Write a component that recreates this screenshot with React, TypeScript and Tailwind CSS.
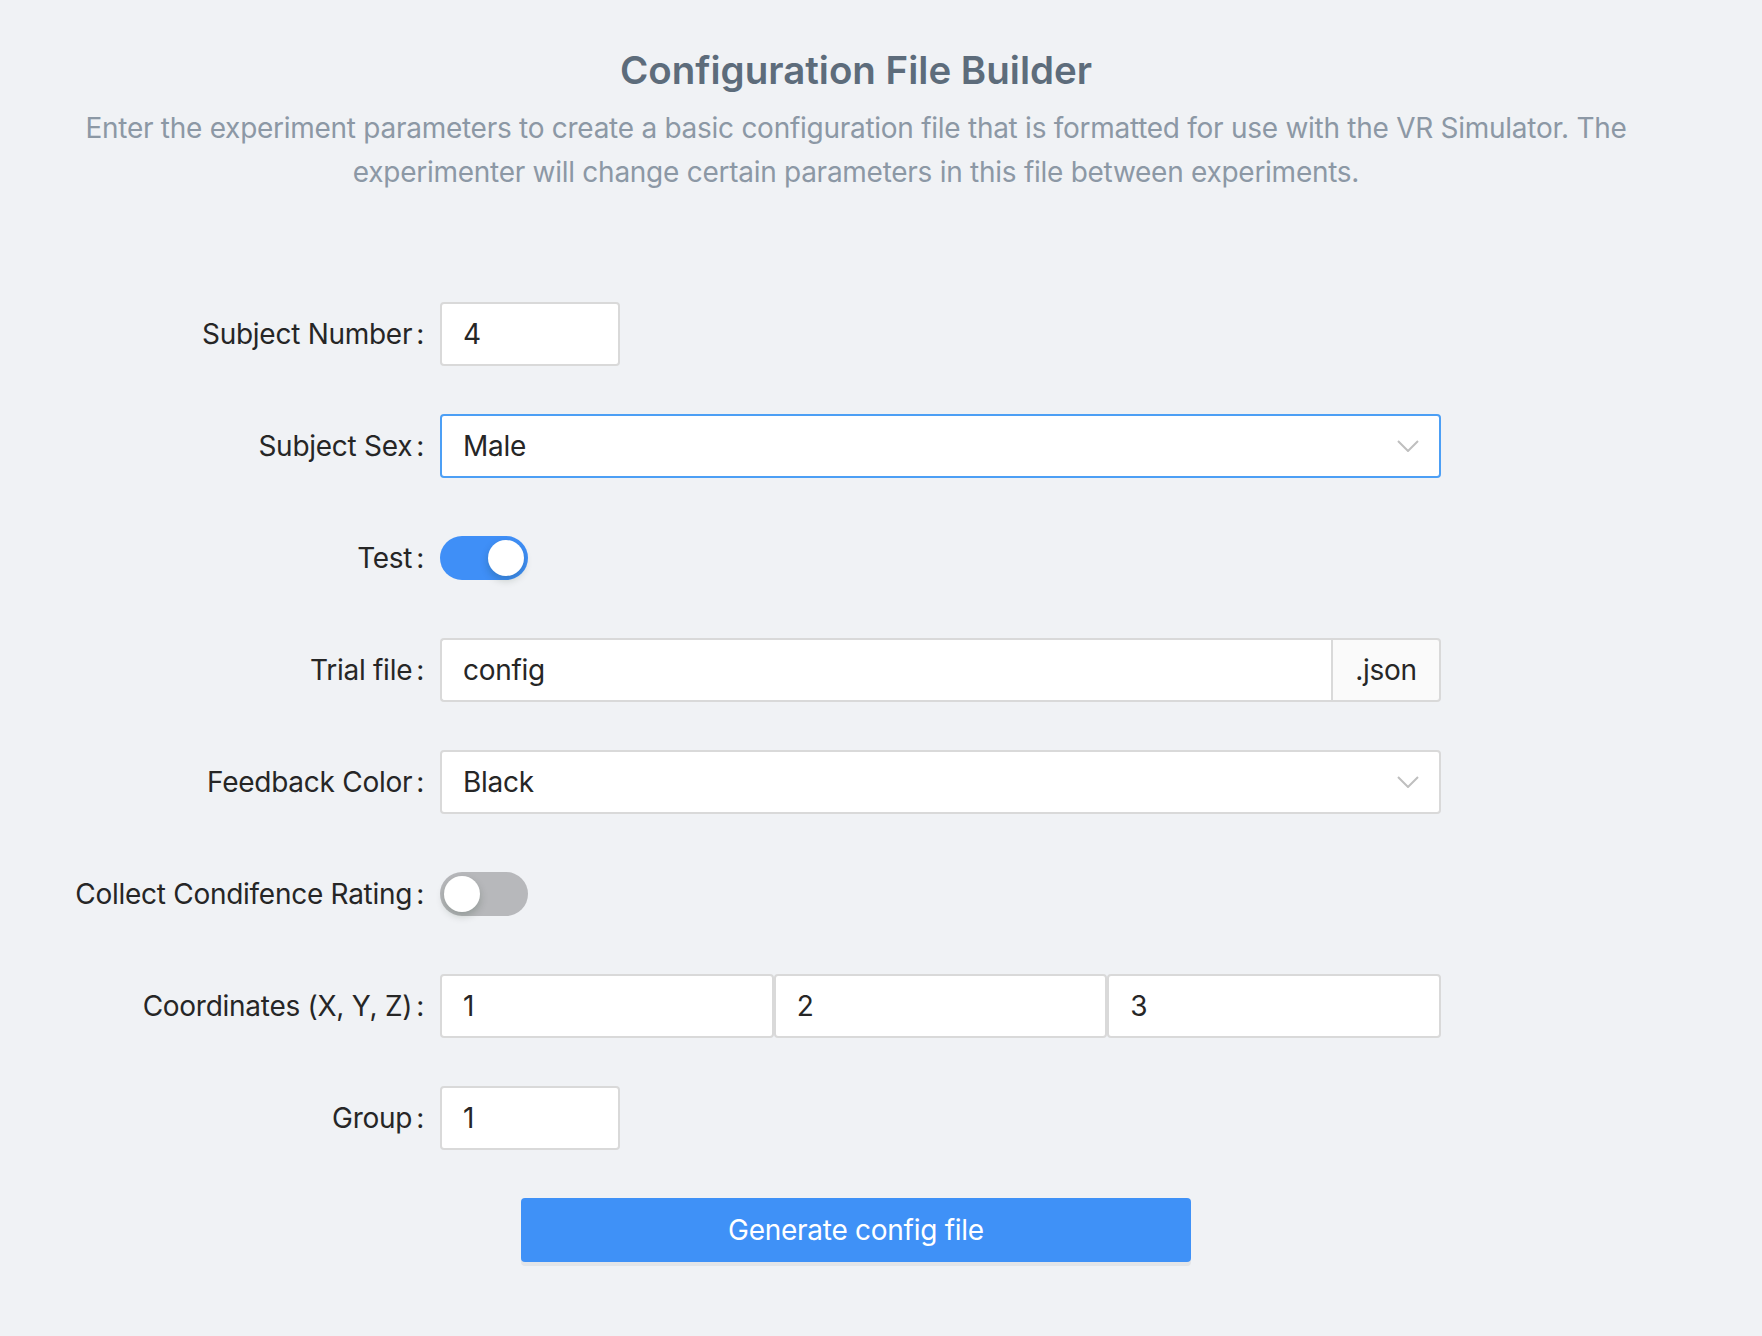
import React from "react";

const font = { fontFamily: 'Inter, "Noto Sans", "Liberation Sans", sans-serif' };

function Label({ children }: { children: React.ReactNode }) {
  return (
    <div className="w-[440px] shrink-0 flex items-center justify-end h-[64px] pr-[16px] text-[28px] tracking-[-0.27px] text-[#262626]">
      <span>{children}</span>
      <span className="ml-[4px]">:</span>
    </div>
  );
}

function Row({ label, children }: { label: string; children: React.ReactNode }) {
  return (
    <div className="flex items-center h-[64px]">
      <Label>{label}</Label>
      <div className="w-[1001px] flex items-center h-[64px]">{children}</div>
    </div>
  );
}

function TextBox({ value, className = "" }: { value: string; className?: string }) {
  return (
    <div
      className={
        "h-[64px] bg-white border-2 border-[#d9d9d9] rounded-[4px] flex items-center px-[21px] text-[28px] tracking-[-0.27px] text-[#262626] " +
        className
      }
    >
      {value}
    </div>
  );
}

function Chevron() {
  return (
    <svg width="22" height="12" viewBox="0 0 22 12" fill="none" className="shrink-0">
      <path d="M1 1 L11 11 L21 1" stroke="#bfbfbf" strokeWidth="2" />
    </svg>
  );
}

function SelectBox({ value, focused }: { value: string; focused?: boolean }) {
  return (
    <div
      className={
        "w-full h-[64px] bg-white border-2 rounded-[4px] flex items-center justify-between pl-[21px] pr-[20px] text-[28px] tracking-[-0.27px] text-[#262626] " +
        (focused ? "border-[#4c9ff5]" : "border-[#d9d9d9]")
      }
    >
      <span>{value}</span>
      <Chevron />
    </div>
  );
}

function Switch({ on }: { on: boolean }) {
  return (
    <div
      className={
        "w-[88px] h-[44px] rounded-full flex items-center px-[4px] " +
        (on ? "bg-[#3f8ff7] justify-end" : "bg-[#b7b8bb] justify-start")
      }
    >
      <div className="w-[36px] h-[36px] rounded-full bg-white shadow-[0_4px_8px_rgba(0,35,11,0.2)]" />
    </div>
  );
}

export default function App() {
  return (
    <div className="min-h-screen bg-[#f0f2f5]" style={font}>
      <div className="w-[1712px] pt-[44px] pb-[60px]">
        <div className="text-center">
          <h1 className="text-[38.5px] leading-[52px] font-semibold text-[#5d6c7b]">
            Configuration File Builder
          </h1>
          <p className="mt-[10px] text-[28px] tracking-[-0.27px] leading-[44px] text-[#8c98a5]">
            Enter the experiment parameters to create a basic configuration file that is formatted for use with the VR Simulator. The
            <br />
            experimenter will change certain parameters in this file between experiments.
          </p>
        </div>

        <div className="mt-[108px] flex flex-col gap-[48px]">
          <Row label="Subject Number">
            <TextBox value="4" className="w-[180px]" />
          </Row>
          <Row label="Subject Sex">
            <SelectBox value="Male" focused />
          </Row>
          <Row label="Test">
            <Switch on />
          </Row>
          <Row label="Trial file">
            <div className="w-full flex h-[64px]">
              <div className="flex-1 h-[64px] bg-white border-2 border-r-0 border-[#d9d9d9] rounded-l-[4px] flex items-center px-[21px] text-[28px] tracking-[-0.27px] text-[#262626]">
                config
              </div>
              <div className="w-[110px] h-[64px] bg-[#fafafa] border-2 border-[#d9d9d9] rounded-r-[4px] flex items-center justify-center text-[28px] tracking-[-0.27px] text-[#262626]">
                .json
              </div>
            </div>
          </Row>
          <Row label="Feedback Color">
            <SelectBox value="Black" />
          </Row>
          <Row label="Collect Condifence Rating">
            <Switch on={false} />
          </Row>
          <Row label="Coordinates (X, Y, Z)">
            <div className="w-full grid grid-cols-3">
              <TextBox value="1" />
              <TextBox value="2" />
              <TextBox value="3" />
            </div>
          </Row>
          <Row label="Group">
            <TextBox value="1" className="w-[180px]" />
          </Row>
          <div className="flex justify-center">
            <button className="w-[670px] h-[64px] rounded-[4px] bg-[#3f91f7] text-white text-[28px] tracking-[-0.27px] shadow-[0_4px_0_rgba(0,0,0,0.05)]">
              Generate config file
            </button>
          </div>
        </div>
      </div>
    </div>
  );
}
